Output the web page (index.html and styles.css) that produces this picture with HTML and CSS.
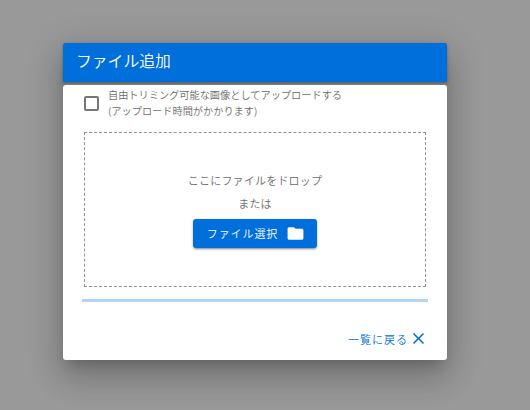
FILE: index.html
```html
<!DOCTYPE html>
<html lang="ja">

<head>
    <meta charset="UTF-8">
    <meta name="viewport" content="width=device-width, initial-scale=1.0">
    <title>ファイル追加</title>
    <link rel="stylesheet" href="styles.css">
</head>

<body>
    <div class="dialog">
        <header class="toolbar">
            <h1>ファイル追加</h1>
        </header>

        <div class="card">
            <label class="check">
                <input type="checkbox">
                <span>自由トリミング可能な画像としてアップロードする<br>(アップロード時間がかかります)</span>
            </label>

            <div class="dropzone">
                <p>ここにファイルをドロップ</p>
                <p>または</p>
                <button class="btn-select" type="button">
                    <span>ファイル選択</span>
                    <svg width="19" height="19" viewBox="0 0 24 24">
                        <path d="M10 4H4c-1.11 0-2 .89-2 2v12c0 1.1.9 2 2 2h16c1.1 0 2-.9 2-2V8c0-1.11-.9-2-2-2h-8l-2-2z" fill="currentColor"/>
                    </svg>
                </button>
            </div>

            <div class="progress"></div>

            <div class="actions">
                <button class="btn-back" type="button">
                    <span>一覧に戻る</span>
                    <svg width="19" height="19" viewBox="0 0 24 24">
                        <path d="M19 6.41L17.59 5 12 10.59 6.41 5 5 6.41 10.59 12 5 17.59 6.41 19 12 13.41 17.59 19 19 17.59 13.41 12z" fill="currentColor"/>
                    </svg>
                </button>
            </div>
        </div>
    </div>
</body>

</html>
```

FILE: styles.css
```css
* {
    box-sizing: border-box;
}

body {
    margin: 0;
    height: 410px;
    padding: 43px 83px 0 63px;
    overflow: hidden;
    background-color: #999;
    color: #6c6c6c;
    font-family: "Noto Sans CJK JP", sans-serif;
    font-weight: 350;
}

.dialog {
    height: 317px;
    display: flex;
    flex-direction: column;
    gap: 3px;
    background-color: #808080;
    border-radius: 3px;
    box-shadow: 0 9px 12px -6px rgba(0, 0, 0, 0.2),
        0 19px 30px 2px rgba(0, 0, 0, 0.14),
        0 7px 37px 6px rgba(0, 0, 0, 0.12);
}

.toolbar {
    height: 39px;
    padding: 0 13px;
    display: flex;
    align-items: center;
    background-color: #006fdc;
    border-radius: 3px 3px 0 0;
    box-shadow: 0 1px 3px rgba(0, 0, 0, 0.3);
}

.toolbar h1 {
    margin: 0 0 4px;
    color: #fff;
    font-size: 15.8px;
    font-weight: 350;
    line-height: 24px;
}

.card {
    flex: 1;
    padding: 1px 19px 0;
    background-color: #fff;
    border-radius: 3px;
}

.check {
    display: flex;
    align-items: center;
    gap: 8px;
    height: 33px;
    padding-left: 3px;
    font-size: 10.2px;
    line-height: 16px;
}

.check input {
    appearance: none;
    width: 15px;
    height: 15px;
    margin: 2px 0 0 -1px;
    border: 2px solid #777;
    border-radius: 2px;
}

.check span {
    padding-left: 1px;
}

.dropzone {
    height: 155px;
    margin: 13px 2px 0;
    padding-top: 36px;
    display: flex;
    flex-direction: column;
    align-items: center;
    border: 1px dashed #929292;
}

.dropzone p {
    margin: 0;
    font-size: 11px;
    letter-spacing: 0.2px;
    line-height: 23px;
}

.btn-select {
    display: flex;
    align-items: center;
    justify-content: center;
    gap: 8px;
    width: 124px;
    height: 29px;
    margin-top: 4px;
    padding: 0 0 0 2px;
    border: none;
    border-radius: 3px;
    background-color: #006fdc;
    color: #fff;
    font: inherit;
    font-size: 11px;
    letter-spacing: 0.9px;
    box-shadow: 0 2px 2px -1px rgba(0, 0, 0, 0.3), 0 1px 3px rgba(0, 0, 0, 0.25);
}

.btn-select span {
    padding-bottom: 2px;
}

.progress {
    height: 3px;
    margin-top: 12px;
    background-color: #b3d4f5;
}

.actions {
    display: flex;
    justify-content: flex-end;
    margin-top: 27px;
}

.btn-back {
    display: flex;
    align-items: center;
    gap: 1px;
    height: 20px;
    padding: 0;
    border: none;
    background: none;
    color: #006fdc;
    font: inherit;
    font-size: 11px;
    letter-spacing: 1px;
}

.btn-back svg {
    margin-bottom: 2px;
}
```
